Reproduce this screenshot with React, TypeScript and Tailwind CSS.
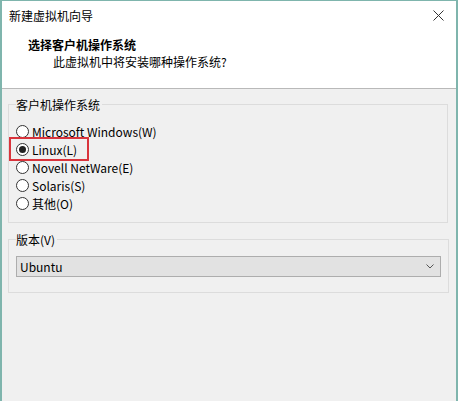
import React from 'react';

const FONT = { fontFamily: '"Noto Sans CJK SC", "Noto Sans", sans-serif' };

const OPTIONS = [
  { label: 'Microsoft Windows(W)', checked: false },
  { label: 'Linux(L)', checked: true },
  { label: 'Novell NetWare(E)', checked: false },
  { label: 'Solaris(S)', checked: false },
  { label: '其他(O)', checked: false },
];

const Radio: React.FC<{ checked: boolean }> = ({ checked }) => (
  <span className="w-[13px] h-[13px] rounded-full border border-[#333333] bg-white flex items-center justify-center shrink-0">
    {checked && <span className="w-[7px] h-[7px] rounded-full bg-[#222222]" />}
  </span>
);

export default function App() {
  return (
    <div
      className="w-[458px] h-[401px] bg-[#f0f0f0] border-x-2 border-t border-[#7fb5ad] flex flex-col text-[12px] text-black"
      style={FONT}
    >
      <div className="h-[29px] bg-white flex items-center justify-between pl-[7px] pr-[12px]">
        <span className="leading-[17px]">新建虚拟机向导</span>
        <svg width="11" height="11" viewBox="0 0 11 11">
          <path d="M0.5 0.5 L10.5 10.5 M10.5 0.5 L0.5 10.5" stroke="#333" strokeWidth="1" fill="none" />
        </svg>
      </div>

      <div className="h-[59px] bg-white border-b border-[#b9b9b9] pt-[6px]">
        <div className="pl-[26px] font-bold leading-[17px]">选择客户机操作系统</div>
        <div className="pl-[51px] leading-[17px]">此虚拟机中将安装哪种操作系统?</div>
      </div>

      <div className="flex flex-col pl-[6px] pt-[7px]">
        <fieldset className="w-[440px] h-[127px] border border-[#dcdcdc] px-[7px]">
          <legend className="leading-[17px] pr-[2px]">客户机操作系统</legend>
          <div className="flex flex-col mt-[9px]">
            {OPTIONS.map(o => (
              <div key={o.label} className="relative h-[18px] flex items-center gap-[3px]">
                <Radio checked={o.checked} />
                <span className="leading-[17px]">{o.label}</span>
                {o.checked && (
                  <span className="absolute left-[-7px] top-[-3px] w-[80px] h-[24px] border-2 border-[#d9343c]" />
                )}
              </div>
            ))}
          </div>
        </fieldset>

        <fieldset className="w-[440px] h-[62px] mt-[8px] border border-[#dcdcdc] px-[7px]">
          <legend className="leading-[17px] pr-[2px]">版本(V)</legend>
          <div className="mt-[8px] w-[425px] h-[21px] bg-[#e2e2e2] border border-[#adadad] flex items-center justify-between pl-[3px] pr-[6px]">
            <span className="leading-[17px]">Ubuntu</span>
            <svg width="8" height="5" viewBox="0 0 8 5">
              <path d="M0.5 0.5 L4 4 L7.5 0.5" stroke="#555" strokeWidth="1" fill="none" />
            </svg>
          </div>
        </fieldset>
      </div>
    </div>
  );
}
